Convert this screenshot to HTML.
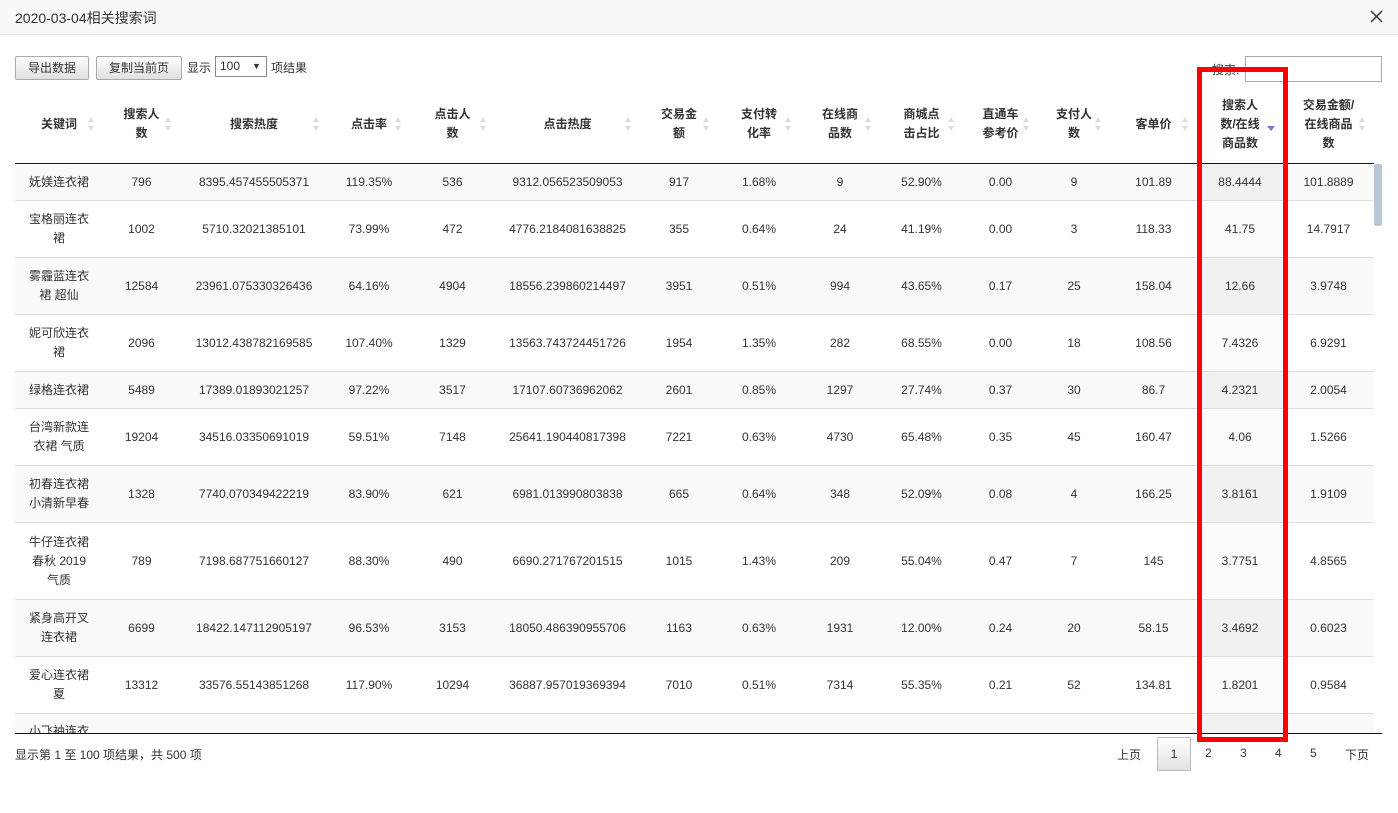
<!DOCTYPE html>
<html><head><meta charset="utf-8"><style>
*{margin:0;padding:0;box-sizing:border-box}
body{width:1398px;height:813px;background:#fff;font-family:"Liberation Sans","Noto Sans CJK SC",sans-serif;font-size:12px;color:#333;position:relative;overflow:hidden}
.abs{position:absolute}
.title{left:0;top:0;width:1398px;height:35px;background:#f8f8f8;border-bottom:1px solid #e5e5e5}
.btn{height:24px;border:1px solid #aaa;border-radius:2px;background:linear-gradient(#fff,#e0e0e0);line-height:22px;text-align:center;font-size:12px;color:#333}
table{border-collapse:collapse;table-layout:fixed;position:absolute;left:15px;width:1359px}
td,th{text-align:center;font-weight:normal;line-height:19px;padding:0 4px;position:relative}
th{height:77px;font-weight:bold;color:#333;background:#fff}
.sort{position:absolute;right:8px;top:30px;width:8px;height:16px}
tbody tr td{border-top:1px solid #ddd;color:#333}
tbody tr:nth-child(odd){background:#f9f9f9}
tbody tr:nth-child(odd) td.s{background:#f1f1f1}
tbody tr:nth-child(even) td.s{background:#fafafa}
</style></head><body>
<div class="abs title"></div>
<div class="abs" style="left:15px;top:8px;font-size:14px;color:#333">2020-03-04相关搜索词</div>
<svg class="abs" style="left:1370px;top:10px" width="13" height="13" viewBox="0 0 13 13"><path d="M1 1L12 12M12 1L1 12" stroke="#333" stroke-width="1.5"/></svg>
<div class="abs btn" style="left:15px;top:56px;width:74px">导出数据</div>
<div class="abs btn" style="left:96px;top:56px;width:86px">复制当前页</div>
<div class="abs" style="left:187px;top:59px">显示</div>
<div class="abs" style="left:215px;top:56px;width:52px;height:21px;border:1px solid #888;background:#fff;padding-left:4px;line-height:19px">100 <span style="position:absolute;left:36px;font-size:9px">▼</span></div>
<div class="abs" style="left:271px;top:59px">项结果</div>
<div class="abs" style="left:1212px;top:61px">搜索:</div>
<div class="abs" style="left:1245px;top:56px;width:137px;height:26px;border:1px solid #aaa;background:#fff"></div>

<table style="top:86px">
<colgroup><col style="width:88px"><col style="width:77px"><col style="width:148px"><col style="width:82px"><col style="width:85px"><col style="width:145px"><col style="width:78px"><col style="width:82px"><col style="width:80px"><col style="width:83px"><col style="width:75px"><col style="width:72px"><col style="width:87px"><col style="width:86px"><col style="width:91px"></colgroup>
<thead>
<tr style="border-bottom:1px solid #111">
<th>关键词<svg class="sort"><path d="M4 1L7 6H1Z M4 15L7 10H1Z" fill="#ddd"/></svg></th>
<th>搜索人<br>数<svg class="sort"><path d="M4 1L7 6H1Z M4 15L7 10H1Z" fill="#ddd"/></svg></th>
<th>搜索热度<svg class="sort"><path d="M4 1L7 6H1Z M4 15L7 10H1Z" fill="#ddd"/></svg></th>
<th>点击率<svg class="sort"><path d="M4 1L7 6H1Z M4 15L7 10H1Z" fill="#ddd"/></svg></th>
<th>点击人<br>数<svg class="sort"><path d="M4 1L7 6H1Z M4 15L7 10H1Z" fill="#ddd"/></svg></th>
<th>点击热度<svg class="sort"><path d="M4 1L7 6H1Z M4 15L7 10H1Z" fill="#ddd"/></svg></th>
<th>交易金<br>额<svg class="sort"><path d="M4 1L7 6H1Z M4 15L7 10H1Z" fill="#ddd"/></svg></th>
<th>支付转<br>化率<svg class="sort"><path d="M4 1L7 6H1Z M4 15L7 10H1Z" fill="#ddd"/></svg></th>
<th>在线商<br>品数<svg class="sort"><path d="M4 1L7 6H1Z M4 15L7 10H1Z" fill="#ddd"/></svg></th>
<th>商城点<br>击占比<svg class="sort"><path d="M4 1L7 6H1Z M4 15L7 10H1Z" fill="#ddd"/></svg></th>
<th>直通车<br>参考价<svg class="sort"><path d="M4 1L7 6H1Z M4 15L7 10H1Z" fill="#ddd"/></svg></th>
<th>支付人<br>数<svg class="sort"><path d="M4 1L7 6H1Z M4 15L7 10H1Z" fill="#ddd"/></svg></th>
<th>客单价<svg class="sort"><path d="M4 1L7 6H1Z M4 15L7 10H1Z" fill="#ddd"/></svg></th>
<th>搜索人<br>数/在线<br>商品数<svg class="sort" style="right:8px"><path d="M0 10H8L4 15Z" fill="#6b7bd0"/></svg></th>
<th>交易金额/<br>在线商品<br>数<svg class="sort"><path d="M4 1L7 6H1Z M4 15L7 10H1Z" fill="#ddd"/></svg></th>
</tr></thead></table>

<div class="abs" style="left:0;top:164px;width:1398px;height:569px;overflow:hidden">
<table style="top:-1px">
<colgroup><col style="width:88px"><col style="width:77px"><col style="width:148px"><col style="width:82px"><col style="width:85px"><col style="width:145px"><col style="width:78px"><col style="width:82px"><col style="width:80px"><col style="width:83px"><col style="width:75px"><col style="width:72px"><col style="width:87px"><col style="width:86px"><col style="width:91px"></colgroup>
<tbody>
<tr style="height:37px"><td>妩媄连衣裙</td><td>796</td><td>8395.457455505371</td><td>119.35%</td><td>536</td><td>9312.056523509053</td><td>917</td><td>1.68%</td><td>9</td><td>52.90%</td><td>0.00</td><td>9</td><td>101.89</td><td class="s">88.4444</td><td>101.8889</td></tr>
<tr style="height:57px"><td>宝格丽连衣<br>裙</td><td>1002</td><td>5710.32021385101</td><td>73.99%</td><td>472</td><td>4776.2184081638825</td><td>355</td><td>0.64%</td><td>24</td><td>41.19%</td><td>0.00</td><td>3</td><td>118.33</td><td class="s">41.75</td><td>14.7917</td></tr>
<tr style="height:57px"><td>雾霾蓝连衣<br>裙 超仙</td><td>12584</td><td>23961.075330326436</td><td>64.16%</td><td>4904</td><td>18556.239860214497</td><td>3951</td><td>0.51%</td><td>994</td><td>43.65%</td><td>0.17</td><td>25</td><td>158.04</td><td class="s">12.66</td><td>3.9748</td></tr>
<tr style="height:57px"><td>妮可欣连衣<br>裙</td><td>2096</td><td>13012.438782169585</td><td>107.40%</td><td>1329</td><td>13563.743724451726</td><td>1954</td><td>1.35%</td><td>282</td><td>68.55%</td><td>0.00</td><td>18</td><td>108.56</td><td class="s">7.4326</td><td>6.9291</td></tr>
<tr style="height:37px"><td>绿格连衣裙</td><td>5489</td><td>17389.01893021257</td><td>97.22%</td><td>3517</td><td>17107.60736962062</td><td>2601</td><td>0.85%</td><td>1297</td><td>27.74%</td><td>0.37</td><td>30</td><td>86.7</td><td class="s">4.2321</td><td>2.0054</td></tr>
<tr style="height:57px"><td>台湾新款连<br>衣裙 气质</td><td>19204</td><td>34516.03350691019</td><td>59.51%</td><td>7148</td><td>25641.190440817398</td><td>7221</td><td>0.63%</td><td>4730</td><td>65.48%</td><td>0.35</td><td>45</td><td>160.47</td><td class="s">4.06</td><td>1.5266</td></tr>
<tr style="height:57px"><td>初春连衣裙<br>小清新早春</td><td>1328</td><td>7740.070349422219</td><td>83.90%</td><td>621</td><td>6981.013990803838</td><td>665</td><td>0.64%</td><td>348</td><td>52.09%</td><td>0.08</td><td>4</td><td>166.25</td><td class="s">3.8161</td><td>1.9109</td></tr>
<tr style="height:77px"><td>牛仔连衣裙<br>春秋 2019<br>气质</td><td>789</td><td>7198.687751660127</td><td>88.30%</td><td>490</td><td>6690.271767201515</td><td>1015</td><td>1.43%</td><td>209</td><td>55.04%</td><td>0.47</td><td>7</td><td>145</td><td class="s">3.7751</td><td>4.8565</td></tr>
<tr style="height:57px"><td>紧身高开叉<br>连衣裙</td><td>6699</td><td>18422.147112905197</td><td>96.53%</td><td>3153</td><td>18050.486390955706</td><td>1163</td><td>0.63%</td><td>1931</td><td>12.00%</td><td>0.24</td><td>20</td><td>58.15</td><td class="s">3.4692</td><td>0.6023</td></tr>
<tr style="height:57px"><td>爱心连衣裙<br>夏</td><td>13312</td><td>33576.55143851268</td><td>117.90%</td><td>10294</td><td>36887.957019369394</td><td>7010</td><td>0.51%</td><td>7314</td><td>55.35%</td><td>0.21</td><td>52</td><td>134.81</td><td class="s">1.8201</td><td>0.9584</td></tr>
<tr style="height:57px"><td style="vertical-align:top;padding-top:8px">小飞袖连衣<br>裙</td><td></td><td></td><td></td><td></td><td></td><td></td><td></td><td></td><td></td><td></td><td></td><td></td><td class="s"></td><td></td></tr>
</tbody></table>
<div class="abs" style="left:1374px;top:0;width:8px;height:62px;background:#b7c7d6;border-radius:2px"></div>
</div>
<div class="abs" style="left:15px;top:733px;width:1367px;height:1px;background:#111"></div>

<div class="abs" style="left:1197px;top:67px;width:91px;height:675px;border:5px solid #f00"></div>

<div class="abs" style="left:15px;top:746px">显示第 1 至 100 项结果，共 500 项</div>
<div class="abs" style="left:1117px;top:746px">上页</div>
<div class="abs" style="left:1157px;top:737px;width:34px;height:34px;border:1px solid #bbb;border-radius:2px;background:linear-gradient(#fff,#e2e2e2);text-align:center;line-height:32px">1</div>
<div class="abs" style="left:1205px;top:746px">2</div>
<div class="abs" style="left:1240px;top:746px">3</div>
<div class="abs" style="left:1275px;top:746px">4</div>
<div class="abs" style="left:1310px;top:746px">5</div>
<div class="abs" style="left:1345px;top:746px">下页</div>
</body></html>
